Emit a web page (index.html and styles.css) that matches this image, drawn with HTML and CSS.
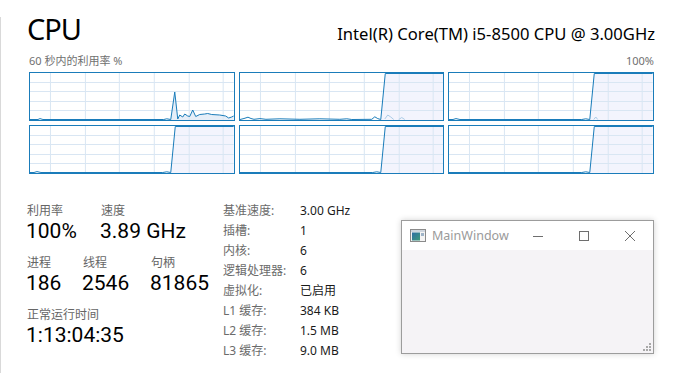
FILE: index.html
```html
<!DOCTYPE html>
<html lang="zh-CN">
<head>
    <meta charset="UTF-8">
    <title>CPU</title>
    <link rel="stylesheet" href="styles.css">
</head>
<body>
    <div class="page">
        <header class="head">
            <h1 class="title">CPU</h1>
            <div class="model">Intel(R) Core(TM) i5-8500 CPU @ 3.00GHz</div>
        </header>
        <div class="caption"><span>60 秒内的利用率 %</span><span>100%</span></div>

        <svg class="defs" width="0" height="0">
            <defs>
                <g id="grid" stroke="#d9e6f3" stroke-width="1">
                    <path d="M20.5,0V47M55.5,0V47M89.5,0V47M124.5,0V47M159.5,0V47M193.5,0V47"/>
                    <path d="M0,9.5H204M0,18.5H204M0,28.5H204M0,37.5H204"/>
                </g>
            </defs>
        </svg>

        <div class="graphs">
            <div class="graph">
                <svg viewBox="0 0 204 47" preserveAspectRatio="none">
                    <path d="M141,47 L145,19 L148,46 L150,42 L153,44 L155,41 L158,43 L160,43.5 L163,37 L166,43.5 L170,41.5 L175,41 L178,40.5 L182,41.5 L190,42 L196,43 L199,45 L202,44 L204,43 V47Z" fill="#e6eef8"/>
                    <use href="#grid"/>
                    <path d="M0,46.5 L8,46.5 L10,45.6 L13,46.5 L134,46.5 L137,45.8 L141,46.5 L145,19 L148,46 L150,42 L153,44 L155,41 L158,43 L160,43.5 L163,37 L166,43.5 L170,41.5 L175,41 L178,40.5 L182,41.5 L190,42 L196,43 L199,45 L202,44 L204,43" fill="none" stroke="#1a7cba" stroke-width="1"/>
                </svg>
            </div>
            <div class="graph">
                <svg viewBox="0 0 204 47" preserveAspectRatio="none">
                    <path d="M141,47 L145.5,0.5 H204 V47Z" fill="#f3f4fd"/>
                    <use href="#grid"/>
                    <path d="M145,46 L148,42 L151,44 L154,46.5 M159,46.5 L162,44.5 L165,46.5" fill="none" stroke="#a9cbe6" stroke-width="1"/>
                    <path d="M0,46.5 L4,45.5 L8,44.2 L11,45.5 L14,46.3 L20,45.6 L26,46.3 L40,45.8 L60,46.3 L80,45.8 L100,46.3 L107,45.8 L112,46.5 L132,46.3 L135,43.8 L138,45.6 L141,46.5 L145.5,0.5 H204" fill="none" stroke="#1a7cba" stroke-width="1"/>
                </svg>
            </div>
            <div class="graph">
                <svg viewBox="0 0 204 47" preserveAspectRatio="none">
                    <path d="M141,47 L145.5,0.5 H204 V47Z" fill="#f3f4fd"/>
                    <use href="#grid"/>
                    <path d="M145,46.5 L147,44 L149,46.5" fill="none" stroke="#a9cbe6" stroke-width="1"/>
                    <path d="M0,46.5 L4,46.5 L7,45.6 L11,46.5 L133,46.5 L137,45.8 L141,46.5 L145.5,0.5 H204" fill="none" stroke="#1a7cba" stroke-width="1"/>
                </svg>
            </div>
            <div class="graph">
                <svg viewBox="0 0 204 47" preserveAspectRatio="none">
                    <path d="M141,47 L145.5,0.5 H204 V47Z" fill="#f3f4fd"/>
                    <use href="#grid"/>
                    <path d="M0,46.5 L4,46.5 L7,45.6 L11,46.5 L133,46.5 L137,45.8 L141,46.5 L145.5,0.5 H204" fill="none" stroke="#1a7cba" stroke-width="1"/>
                </svg>
            </div>
            <div class="graph">
                <svg viewBox="0 0 204 47" preserveAspectRatio="none">
                    <path d="M141,47 L145.5,0.5 H204 V47Z" fill="#f3f4fd"/>
                    <use href="#grid"/>
                    <path d="M0,46.5 L133,46.5 L137,45.8 L141,46.5 L145.5,0.5 H204" fill="none" stroke="#1a7cba" stroke-width="1"/>
                </svg>
            </div>
            <div class="graph">
                <svg viewBox="0 0 204 47" preserveAspectRatio="none">
                    <path d="M141,47 L145.5,0.5 H204 V47Z" fill="#f3f4fd"/>
                    <use href="#grid"/>
                    <path d="M0,46.5 L133,46.5 L137,45.8 L141,46.5 L145.5,0.5 H204" fill="none" stroke="#1a7cba" stroke-width="1"/>
                </svg>
            </div>
        </div>

        <div class="details">
            <div class="stats">
                <div class="stat-row">
                    <div class="stat w74"><div class="stat-label">利用率</div><div class="stat-value">100%</div></div>
                    <div class="stat"><div class="stat-label">速度</div><div class="stat-value">3.89 GHz</div></div>
                </div>
                <div class="stat-row">
                    <div class="stat w56"><div class="stat-label">进程</div><div class="stat-value">186</div></div>
                    <div class="stat w68"><div class="stat-label">线程</div><div class="stat-value">2546</div></div>
                    <div class="stat"><div class="stat-label">句柄</div><div class="stat-value">81865</div></div>
                </div>
                <div class="stat-row">
                    <div class="stat"><div class="stat-label">正常运行时间</div><div class="stat-value">1:13:04:35</div></div>
                </div>
            </div>

            <table class="specs">
                <tr><th>基准速度:</th><td>3.00 GHz</td></tr>
                <tr><th>插槽:</th><td>1</td></tr>
                <tr><th>内核:</th><td>6</td></tr>
                <tr><th>逻辑处理器:</th><td>6</td></tr>
                <tr><th>虚拟化:</th><td>已启用</td></tr>
                <tr><th>L1 缓存:</th><td>384 KB</td></tr>
                <tr><th>L2 缓存:</th><td>1.5 MB</td></tr>
                <tr><th>L3 缓存:</th><td>9.0 MB</td></tr>
            </table>

            <div class="window">
                <div class="win-bar">
                    <svg class="win-icon" width="16" height="13" viewBox="0 0 16 13">
                        <rect x="0.5" y="0.5" width="15" height="12" fill="#f4f4f4" stroke="#8a8a8a"/>
                        <rect x="1" y="1" width="14" height="2" fill="#cfd6de"/>
                        <rect x="2" y="3.5" width="8" height="8" fill="url(#iconfill)"/>
                        <rect x="11" y="4" width="3" height="3" fill="#9fb4c8"/>
                        <defs>
                            <linearGradient id="iconfill" x1="0" y1="0" x2="1" y2="1">
                                <stop offset="0" stop-color="#2f6fa6"/>
                                <stop offset="1" stop-color="#3f9a7a"/>
                            </linearGradient>
                        </defs>
                    </svg>
                    <span class="win-title">MainWindow</span>
                    <span class="win-btn">
                        <svg width="10" height="10" viewBox="0 0 10 10"><path d="M0,5.5H10" stroke="#6e6e6e"/></svg>
                    </span>
                    <span class="win-btn">
                        <svg width="10" height="10" viewBox="0 0 10 10"><rect x="0.5" y="0.5" width="9" height="9" fill="none" stroke="#6e6e6e"/></svg>
                    </span>
                    <span class="win-btn">
                        <svg width="10" height="10" viewBox="0 0 10 10"><path d="M0,0L10,10M10,0L0,10" stroke="#6e6e6e"/></svg>
                    </span>
                </div>
                <div class="win-body">
                    <svg class="grip" width="8" height="8" viewBox="0 0 8 8" fill="#a8a8a8">
                        <rect x="6" y="0" width="2" height="2"/>
                        <rect x="3" y="3" width="2" height="2"/><rect x="6" y="3" width="2" height="2"/>
                        <rect x="0" y="6" width="2" height="2"/><rect x="3" y="6" width="2" height="2"/><rect x="6" y="6" width="2" height="2"/>
                    </svg>
                </div>
            </div>
        </div>
    </div>
</body>
</html>
```

FILE: styles.css
```css
html{
    height: 100%;
}
body{
    margin: 0;
    height: 100%;
    background: #fff;
    font-family: "Noto Sans", "Noto Sans CJK SC", sans-serif;
    color: #000;
    overflow: hidden;
}
.page{
    margin-top: 17px;
    height: calc(100% - 17px);
    border-left: 1px solid #d9d9d9;
    padding: 0 23px 0 28px;
    box-sizing: border-box;
}
.head{
    display: flex;
    justify-content: space-between;
    align-items: baseline;
}
.title{
    margin: 0 0 0 -2px;
    font-size: 29px;
    letter-spacing: -1px;
    font-weight: normal;
    line-height: 24px;
}
.model{
    font-size: 16.6px;
    line-height: 24px;
    margin-right: -1px;
}
.caption{
    display: flex;
    justify-content: space-between;
    margin-top: 8px;
    font-size: 11px;
    line-height: 14px;
    color: #707070;
}
.defs{
    position: absolute;
}
.graphs{
    display: grid;
    grid-template-columns: repeat(3, 1fr);
    grid-auto-rows: 49px;
    gap: 4px;
    margin-top: 4px;
}
.graph{
    border: 1px solid #1a7cba;
    background: #fff;
}
.graph svg{
    display: block;
    width: 100%;
    height: 100%;
}
.graph svg path,
.graph svg use{
    vector-effect: non-scaling-stroke;
}

.details{
    display: flex;
    align-items: flex-start;
}
.stats{
    width: 196px;
    margin: 30px 0 0 -2px;
}
.stat-row{
    display: flex;
    margin-bottom: 13px;
}
.w74{ width: 74px; }
.w56{ width: 56px; }
.w68{ width: 68px; }
.stat-label{
    font-family: Roboto, "Noto Sans CJK SC", sans-serif;
    font-size: 12px;
    line-height: 14px;
    color: #666;
}
.stat-value{
    font-family: Roboto, sans-serif;
    font-size: 21px;
    line-height: 24px;
    margin: 1px 0 0 -1px;
}

.specs{
    margin-top: 27px;
    border-collapse: collapse;
    font-size: 12px;
    width: 178px;
}
.specs th{
    width: 77px;
    padding: 0;
    font-weight: normal;
    text-align: left;
    color: #6b6b6b;
    line-height: 20px;
    height: 20px;
}
.specs td{
    padding: 0;
    color: #1a1a1a;
    line-height: 20px;
}

.window{
    margin-top: 46px;
    width: 253px;
    height: 134px;
    box-sizing: border-box;
    border: 1px solid #9c9c9c;
    box-shadow: 0 0 6px rgba(0,0,0,0.18);
    display: flex;
    flex-direction: column;
}
.win-bar{
    height: 29px;
    background: #fff;
    display: flex;
    align-items: center;
}
.win-icon{
    margin-left: 8px;
}
.win-title{
    margin-left: 6px;
    flex: 1;
    font-size: 12.5px;
    color: #9a9a9a;
}
.win-btn{
    width: 46px;
    display: flex;
    justify-content: center;
    align-items: center;
}
.win-btn svg{
    display: block;
}
.win-body{
    flex: 1;
    background: #f5f3f6;
    display: flex;
    justify-content: flex-end;
    align-items: flex-end;
    padding: 0 2px 2px 0;
}
```
